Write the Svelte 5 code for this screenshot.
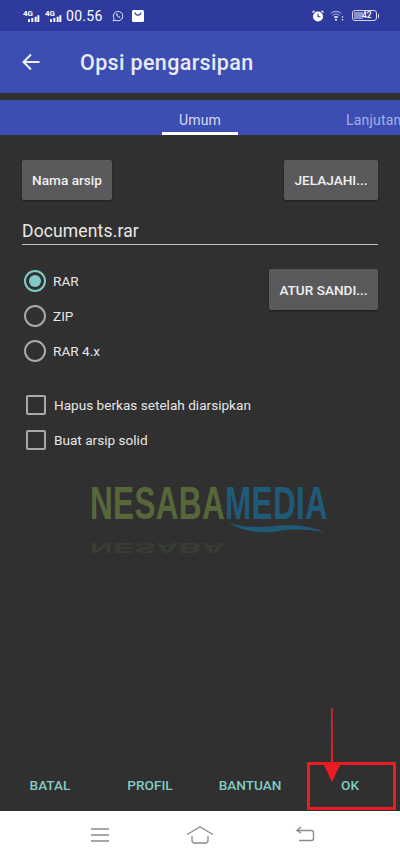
<script lang="ts">
    const formats = [
        { label: "RAR", checked: true },
        { label: "ZIP", checked: false },
        { label: "RAR 4.x", checked: false },
    ];
    const options = ["Hapus berkas setelah diarsipkan", "Buat arsip solid"];
    const actions = ["BATAL", "PROFIL", "BANTUAN", "OK"];
</script>

<div class="phone">
    <div class="status">
        <div class="status-left">
            {#each [0, 1] as _}
                <span class="net">
                    <span class="g">4G</span>
                    <svg width="18" height="12" viewBox="0 0 18 12"><path d="M0 8h3v4H0zM5 6h3v6H5zM10 4h3v8h-3zM14 2h3v10h-3z" fill="#fff" /></svg>
                </span>
            {/each}
            <span class="time">00.56</span>
            <svg class="wa" width="12" height="12" viewBox="0 0 12 12" fill="none" stroke="#dfe3f5" stroke-width="1"><path d="M1.2 11l.8-2.6A4.7 4.7 0 1 1 3.8 10.2z" /><path d="M4 3.8c0 2 1.700 3.700 3.800 4.200l.7-1-1.200-.7-.6.5c-.6-.3-1-.8-1.300-1.400l.5-.6-.6-1.200z" fill="#dfe3f5" stroke="none" /></svg>
            <svg class="bag" width="12" height="12" viewBox="0 0 12 12"><rect width="12" height="12" rx="1.500" fill="#fff" /><path d="M3 2.500c.5 3.500 5.500 3.500 6 0" fill="none" stroke="#2e3a9e" stroke-width="1.200" /></svg>
        </div>
        <div class="status-right">
            <svg width="12" height="12" viewBox="0 0 12 12"><circle cx="6" cy="6.500" r="5" fill="#fff" /><path d="M6 3.500v3.200h2.300" fill="none" stroke="#2e3a9e" stroke-width="1.100" /><path d="M0.500 2.500L2.500 0.700M11.500 2.500L9.500 0.700" stroke="#fff" stroke-width="1.200" /></svg>
            <svg width="14" height="11" viewBox="0 0 14 11" fill="none" stroke="#c3c9ea" stroke-width="0.900"><path d="M.5 3.500a8 8 0 0 1 11 0" /><path d="M2.500 5.500a5.200 5.200 0 0 1 7 0" /><path d="M4.300 7.500a2.600 2.600 0 0 1 3.400 0" stroke="#fff" stroke-width="1.500" /><circle cx="6" cy="9.800" r="1" fill="#fff" stroke="none" /><circle cx="12.500" cy="7" r=".8" fill="#fff" stroke="none" /><circle cx="12.500" cy="9.800" r=".8" fill="#fff" stroke="none" /></svg>
            <span class="battery"><span class="charge"></span><span class="level">42</span></span>
        </div>
    </div>

    <header class="toolbar">
        <svg class="back" width="18" height="18" viewBox="0 0 18 18" fill="none" stroke="#eef0fa" stroke-width="2"><path d="M17.500 9H1.500M9 1.500L1.500 9 9 16.500" /></svg>
        <h1>Opsi pengarsipan</h1>
    </header>

    <nav class="tabs">
        <span class="tab active">Umum</span>
        <span class="tab next">Lanjutan</span>
    </nav>

    <main class="content">
        <div class="row">
            <button class="btn name">Nama arsip</button>
            <button class="btn browse">JELAJAHI...</button>
        </div>
        <div class="field">Documents.rar</div>

        <div class="format">
            <div class="radios">
                {#each formats as f}
                    <div class="radio-row">
                        <span class="radio" class:checked={f.checked}></span>
                        <span>{f.label}</span>
                    </div>
                {/each}
            </div>
            <button class="btn password">ATUR SANDI...</button>
        </div>

        <div class="checks">
            {#each options as o}
                <div class="check-row">
                    <span class="box"></span>
                    <span>{o}</span>
                </div>
            {/each}
        </div>

        <div class="actions">
            {#each actions as a}
                <span class="action">{a}</span>
            {/each}
        </div>
    </main>

    <footer class="navbar">
        <svg width="20" height="16" viewBox="0 0 20 16" stroke="#8a8a8a" stroke-width="1.500"><path d="M1 2h18M1 8h18M1 14h18" /></svg>
        <svg width="28" height="18" viewBox="0 0 28 18" fill="none" stroke="#8a8a8a" stroke-width="1.300"><path d="M1 8.500L14 1l13 7.500" /><path d="M6 10v4.500a2.500 2.500 0 0 0 2.500 2.500h11a2.500 2.500 0 0 0 2.500-2.500V10" /></svg>
        <svg width="20" height="16" viewBox="0 0 20 16" fill="none" stroke="#8a8a8a" stroke-width="1.400"><path d="M2 4.500h14.500a2 2 0 0 1 2 2v6a2 2 0 0 1-2 2H4" /><path d="M6 1L2 4.500 6 7" /></svg>
    </footer>

    <div class="watermark">
        <div class="wordmark"><span class="nesaba">NESABA</span><span class="media">MEDIA</span></div>
        <div class="wordmark reflect" aria-hidden="true"><span class="nesaba">NESABA</span></div>
        <svg class="wave" width="100" height="14" viewBox="0 0 110 16" fill="#1f5a78"><path d="M0 2c10 6 30 7 50 5 20-2 40-1 60 7-20-4-38-4-56-1C34 16 10 12 0 2z" /></svg>
    </div>

    <div class="mark">
        <svg width="20" height="76" viewBox="0 0 20 76"><path d="M9 0l1.600 0 .4 58h-2z" fill="#ed1c24" /><path d="M2 57h16l-8 17z" fill="#ed1c24" /></svg>
    </div>
    <div class="mark-box"></div>
</div>

<style>
    :global(body) {
        margin: 0;
    }

    .phone {
        position: relative;
        width: 400px;
        height: 858px;
        display: flex;
        flex-direction: column;
        background: #303030;
        font-family: Roboto, "Liberation Sans", sans-serif;
        overflow: hidden;
    }

    .status {
        height: 31px;
        flex: none;
        background: #2e3a9e;
        display: flex;
        align-items: center;
        justify-content: space-between;
        padding: 0 23px;
        box-sizing: border-box;
        color: #fff;
    }

    .status-left,
    .status-right {
        display: flex;
        align-items: center;
    }

    .status-right {
        gap: 6px;
    }

    .net {
        display: inline-flex;
        position: relative;
        width: 18px;
        height: 14px;
        margin-right: 4px;
    }

    .net .g {
        position: absolute;
        left: 0;
        top: 0;
        font-size: 8px;
        font-weight: 700;
        line-height: 9px;
    }

    .net svg {
        position: absolute;
        left: 5px;
        top: 5px;
        width: 12px;
        height: 8px;
    }

    .time {
        font-size: 14px;
        font-weight: 400;
        letter-spacing: 0.3px;
        margin-left: -1px;
        margin-right: 9px;
    }

    .wa {
        margin-right: 8px;
    }

    .battery {
        position: relative;
        width: 25px;
        height: 11px;
        border: 1px solid #d5d9f0;
        border-radius: 3px;
        box-sizing: border-box;
        margin-left: 2px;
    }

    .battery::after {
        content: "";
        position: absolute;
        right: -3px;
        top: 2.500px;
        width: 1.500px;
        height: 4px;
        background: #d5d9f0;
    }

    .charge {
        position: absolute;
        left: 1px;
        top: 1px;
        bottom: 1px;
        width: 9px;
        background: #8a93cf;
    }

    .level {
        position: absolute;
        left: 9px;
        top: 0;
        font-size: 8.500px;
        font-weight: 500;
        line-height: 9px;
    }

    .toolbar {
        height: 62px;
        flex: none;
        background: #3d4eb3;
        display: flex;
        align-items: center;
        padding-left: 22px;
        box-sizing: border-box;
        color: #e8eaf6;
    }

    .toolbar h1 {
        margin: 0 0 0 40px;
        font-size: 21.500px;
        font-weight: 500;
        letter-spacing: 0.35px;
    }

    .tabs {
        margin-top: 7px;
        height: 35px;
        flex: none;
        background: #3d4eb3;
        position: relative;
        display: flex;
        font-size: 14px;
        overflow: hidden;
    }

    .tab {
        position: absolute;
        top: 0;
        height: 35px;
        line-height: 40px;
        letter-spacing: 0.2px;
        box-sizing: border-box;
    }

    .tab.active {
        left: 162px;
        width: 76px;
        text-align: center;
        color: #d6daf0;
        border-bottom: 3px solid #fff;
    }

    .tab.next {
        left: 346px;
        color: #a6aedd;
        white-space: nowrap;
    }

    .content {
        flex: 1;
        display: flex;
        flex-direction: column;
        padding: 25px 22px 0;
        color: #e6e6e6;
        font-size: 13.600px;
    }

    .row {
        display: flex;
        justify-content: space-between;
    }

    .btn {
        height: 40px;
        padding: 0;
        border: none;
        border-radius: 2px;
        background: #5a5a5c;
        color: #f0f0f0;
        font: 500 13.600px Roboto, sans-serif;
        box-shadow: 0 1px 2px rgba(0, 0, 0, 0.4);
    }

    .name {
        width: 90px;
    }

    .browse {
        width: 94px;
    }

    .password {
        width: 109px;
        height: 41px;
    }

    .field {
        margin-top: 18px;
        height: 26px;
        border-bottom: 1px solid #c4c4c4;
        font-size: 17.500px;
        line-height: 27px;
        color: #e8e8e8;
        letter-spacing: 0.15px;
    }

    .format {
        margin-top: 24px;
        display: flex;
        justify-content: space-between;
        align-items: flex-start;
    }

    .radios {
        display: flex;
        flex-direction: column;
        gap: 13px;
        margin-top: 1px;
    }

    .radio-row {
        display: flex;
        align-items: center;
        height: 22px;
        padding-left: 2px;
    }

    .radio {
        width: 22px;
        height: 22px;
        border: 2px solid #a9a9a9;
        border-radius: 50%;
        box-sizing: border-box;
        margin-right: 7px;
        position: relative;
    }

    .radio.checked {
        border-color: #80cbc4;
    }

    .radio.checked::after {
        content: "";
        position: absolute;
        inset: 3px;
        border-radius: 50%;
        background: #80cbc4;
    }

    .checks {
        margin-top: 33px;
        display: flex;
        flex-direction: column;
        gap: 15px;
    }

    .check-row {
        display: flex;
        align-items: center;
        height: 20px;
        padding-left: 4px;
    }

    .box {
        width: 20px;
        height: 20px;
        border: 2px solid #a9a9a9;
        border-radius: 2px;
        box-sizing: border-box;
        margin-right: 8px;
    }

    .actions {
        margin: auto -22px 0;
        height: 47px;
        padding-bottom: 3px;
        display: grid;
        grid-template-columns: 100px 100px 100px 100px;
        align-items: center;
        justify-items: center;
        color: #80cbc4;
        font-weight: 500;
    }

    .navbar {
        height: 47px;
        flex: none;
        background: #fff;
        position: relative;
    }

    .navbar svg:nth-child(1) {
        position: absolute;
        left: 90px;
        top: 16px;
    }

    .navbar svg:nth-child(2) {
        position: absolute;
        left: 186px;
        top: 15px;
    }

    .navbar svg:nth-child(3) {
        position: absolute;
        left: 295px;
        top: 15px;
    }

    .watermark {
        position: absolute;
        left: 90px;
        top: 482px;
        width: 240px;
        height: 52px;
    }

    .wordmark {
        font-family: "Liberation Sans", sans-serif;
        font-size: 47px;
        font-weight: 700;
        line-height: 42px;
        white-space: nowrap;
        transform: scale(0.67, 1);
        transform-origin: left top;
        letter-spacing: 0.500px;
        width: 360px;
    }

    .reflect {
        position: absolute;
        left: 0;
        top: 72px;
        transform: scale(0.67, -0.3);
        opacity: 0.25;
    }

    .nesaba {
        color: #56683a;
    }

    .media {
        color: #1f5a78;
    }

    .wave {
        position: absolute;
        left: 137px;
        top: 38px;
    }

    .mark {
        position: absolute;
        left: 322px;
        top: 708px;
        width: 20px;
        height: 76px;
    }

    .mark-box {
        position: absolute;
        left: 307px;
        top: 762px;
        width: 89px;
        height: 48px;
        border: 3px solid #ed1c24;
        box-sizing: border-box;
    }
</style>
